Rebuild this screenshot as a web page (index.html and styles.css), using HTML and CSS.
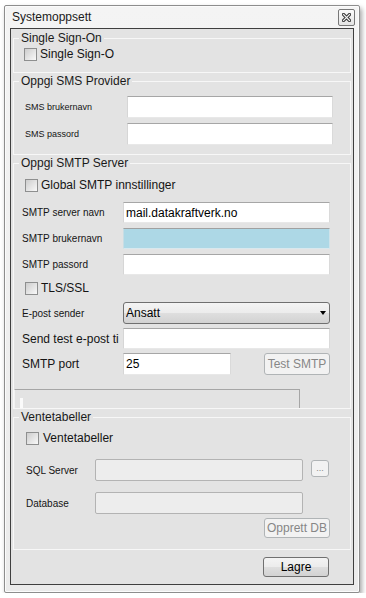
FILE: index.html
```html
<!DOCTYPE html>
<html lang="no">
  <head>
    <meta charset="UTF-8">
    <title>Systemoppsett</title>
    <link rel="stylesheet" href="styles.css">
  </head>
  <body>
    <div class="window">
      <div class="titlebar">
        <span class="title">Systemoppsett</span>
        <button class="close-btn" type="button">
          <svg width="9" height="9" viewBox="0 0 9 9">
            <path d="M1.5 1.5L7.5 7.5M7.5 1.5L1.5 7.5" stroke="#3a3a3a" stroke-width="3.2" stroke-linecap="square"/>
            <path d="M1.5 1.5L7.5 7.5M7.5 1.5L1.5 7.5" stroke="#f4f4f4" stroke-width="1.1" stroke-linecap="square"/>
          </svg>
        </button>
      </div>

      <div class="frame">
        <!-- Single Sign-On -->
        <fieldset class="group">
          <legend>Single Sign-On</legend>
          <label class="check-row check-sso"><input type="checkbox" class="checkbox">Single Sign-O</label>
        </fieldset>

        <!-- SMS -->
        <fieldset class="group">
          <legend>Oppgi SMS Provider</legend>
          <div class="form-grid sms-grid">
            <label class="label-xs">SMS brukernavn</label>
            <input class="field" type="text">
            <label class="label-xs">SMS passord</label>
            <input class="field" type="password">
          </div>
        </fieldset>

        <!-- SMTP -->
        <fieldset class="group">
          <legend>Oppgi SMTP Server</legend>
          <label class="check-row check-smtp"><input type="checkbox" class="checkbox">Global SMTP innstillinger</label>
          <div class="form-grid smtp-grid">
            <label class="label-sm">SMTP server navn</label>
            <input class="field" type="text" value="mail.datakraftverk.no">
            <label class="label-sm">SMTP brukernavn</label>
            <input class="field field-blue" type="text">
            <label class="label-sm">SMTP passord</label>
            <input class="field" type="password">
          </div>
          <label class="check-row check-tls"><input type="checkbox" class="checkbox">TLS/SSL</label>
          <div class="form-grid smtp-grid-2">
            <label class="label-sm">E-post sender</label>
            <div class="select">
              <select>
                <option>Ansatt</option>
              </select>
            </div>
            <label class="label-md">Send test e-post ti</label>
            <input class="field" type="text">
            <label class="label-md">SMTP port</label>
            <div class="port-row">
              <input class="field field-port" type="text" value="25">
              <button class="btn btn-tall" type="button" disabled>Test SMTP</button>
            </div>
          </div>
          <div class="progress"><div class="progress-chunk"></div></div>
        </fieldset>

        <!-- Ventetabeller -->
        <fieldset class="group">
          <legend>Ventetabeller</legend>
          <label class="check-row check-queue"><input type="checkbox" class="checkbox">Ventetabeller</label>
          <div class="form-grid queue-grid">
            <label class="label-sm">SQL Server</label>
            <input class="field field-disabled" type="text" disabled>
            <button class="btn btn-browse" type="button" disabled>...</button>
            <label class="label-sm">Database</label>
            <input class="field field-disabled" type="text" disabled>
          </div>
          <div class="actions">
            <button class="btn" type="button" disabled>Opprett DB</button>
          </div>
        </fieldset>

        <div class="footer">
          <button class="btn btn-primary" type="button">Lagre</button>
        </div>
      </div>
    </div>
  </body>
</html>
```

FILE: styles.css
```css
:root {
  --frame-bg: #e3e3e3;
  --group-line: #f7f7f7;
  --text: #141414;
  --muted-text: #868686;
  --btn-border: #707070;
  --btn-gradient: linear-gradient(#f4f4f4 0%, #ececec 48%, #dedede 52%, #d2d2d2 100%);
}

* {
  box-sizing: border-box;
}

body {
  margin: 0;
  background: #fff;
  font-family: "Liberation Sans", Arial, sans-serif;
  font-size: 12px;
  color: var(--text);
}

.window {
  width: 356px;
  height: 588px;
  margin: 5px 0 0 4px;
  padding-bottom: 7px;
  display: flex;
  flex-direction: column;
  background: linear-gradient(#f4f4f4, #ebebeb);
  border: 1px solid #8d8d8d;
  border-radius: 2px;
  box-shadow: 2px 3px 5px rgba(0, 0, 0, 0.35), inset 0 0 0 1px #fbfbfb;
}

.titlebar {
  height: 22px;
  display: flex;
  align-items: center;
  justify-content: space-between;
  padding: 0 4px 0 7px;
}

.title {
  font-size: 12px;
  color: #1a1a1a;
}

.close-btn {
  width: 17px;
  height: 17px;
  padding: 0;
  display: flex;
  align-items: center;
  justify-content: center;
  border: 1px solid #777;
  border-radius: 2px;
  background: linear-gradient(#fbfbfb, #e4e4e4);
}

.frame {
  flex: 1;
  margin: 0 5px;
  display: flex;
  flex-direction: column;
  background: var(--frame-bg);
  border: 1px solid #3f3f3f;
}

/* group boxes */
.group {
  min-width: 0;
  margin: 1px 2px 0;
  padding: 0;
  border: 1px solid var(--group-line);
}

.group:first-child {
  margin-top: 2px;
}

.group legend {
  margin-left: 5px;
  padding: 0 2px;
  font-size: 12px;
  line-height: 14px;
  color: #1a1a1a;
}

.check-row {
  display: flex;
  align-items: center;
  gap: 3px;
  height: 14px;
  font-size: 12px;
}

.checkbox {
  appearance: none;
  margin: 0;
  width: 13px;
  height: 13px;
  border: 1px solid #8e8f8f;
  background: linear-gradient(135deg, #cdcdcd, #f9f9f9);
}

.check-sso {
  margin: 2px 0 11px;
  padding-left: 10px;
}

.check-smtp {
  margin-top: 8px;
  padding-left: 11px;
}

.check-tls {
  margin-top: 6px;
  padding-left: 11px;
}

.check-queue {
  margin-top: 7px;
  padding-left: 12px;
  gap: 4px;
}

/* form rows */
.form-grid {
  display: grid;
  align-items: center;
}

.label-xs {
  font-size: 9px;
}

.label-sm {
  font-size: 10px;
}

.label-md {
  font-size: 12px;
  white-space: nowrap;
  overflow: hidden;
}

.sms-grid {
  grid-template-columns: 102px 206px;
  row-gap: 5px;
  padding-left: 11px;
  margin: 8px 0 9px;
}

.sms-grid .field {
  height: 22px;
}

.smtp-grid {
  grid-template-columns: 101px 207px;
  row-gap: 5px;
  padding-left: 8px;
  margin-top: 10px;
}

.smtp-grid-2 {
  grid-template-columns: 101px 207px;
  row-gap: 4px;
  padding-left: 8px;
  margin-top: 7px;
}

.queue-grid {
  grid-template-columns: 69px 208px 26px;
  row-gap: 11px;
  padding-left: 12px;
  margin-top: 14px;
}

.field {
  width: 100%;
  height: 21px;
  margin: 0;
  padding: 0 2px;
  font: 12px "Liberation Sans", Arial, sans-serif;
  color: #000;
  background: #fff;
  border: 1px solid;
  border-color: #a6a6a6 #dadada #e8e8e8 #d6d6d6;
  outline: none;
}

.field-blue {
  background: #add8e6;
  border-color: #a0a0a0 #cfe3ea #d8e8ee #c8dde4;
}

.field-disabled {
  height: 22px;
  background: #ededed;
  border: 1px solid #b3b3b3;
  border-radius: 2px;
}

.select {
  position: relative;
  height: 22px;
}

.select select {
  width: 100%;
  height: 100%;
  margin: 0;
  padding: 0 2px;
  appearance: none;
  font: 12px "Liberation Sans", Arial, sans-serif;
  color: #000;
  border: 1px solid var(--btn-border);
  border-radius: 3px;
  background: var(--btn-gradient);
  outline: none;
}

.select::after {
  content: "";
  position: absolute;
  right: 4px;
  top: 9px;
  border-left: 3.5px solid transparent;
  border-right: 3.5px solid transparent;
  border-top: 4px solid #000;
  pointer-events: none;
}

.port-row {
  display: flex;
  align-items: center;
  justify-content: space-between;
}

.field-port {
  width: 108px;
  height: 22px;
}

.progress {
  width: 286px;
  height: 19px;
  margin-top: 14px;
  padding-left: 5px;
  display: flex;
  align-items: flex-end;
  border-top: 1px solid #a6a6a6;
  border-right: 1px solid #a6a6a6;
  border-left: 1px solid #f2f2f2;
}

.progress-chunk {
  width: 3px;
  height: 10px;
  background: #fafafa;
}

/* buttons */
.btn {
  width: 66px;
  height: 20px;
  padding: 0;
  font: 12px "Liberation Sans", Arial, sans-serif;
  color: #000;
  border: 1px solid var(--btn-border);
  border-radius: 3px;
  background: var(--btn-gradient);
}

.btn:disabled {
  color: var(--muted-text);
  border-color: #b0b4b6;
  background: #f2f2f2;
}

.btn-tall {
  height: 22px;
}

.btn-browse {
  width: 18px;
  height: 17px;
  justify-self: end;
  align-self: start;
  margin-top: 1px;
  font-size: 9px;
  line-height: 1;
}

.actions {
  display: flex;
  justify-content: flex-end;
  padding-right: 20px;
  margin: 4px 0 11px;
}

.footer {
  flex: 1;
  display: flex;
  align-items: flex-start;
  justify-content: flex-end;
  padding: 7px 24px 0 0;
}
```
